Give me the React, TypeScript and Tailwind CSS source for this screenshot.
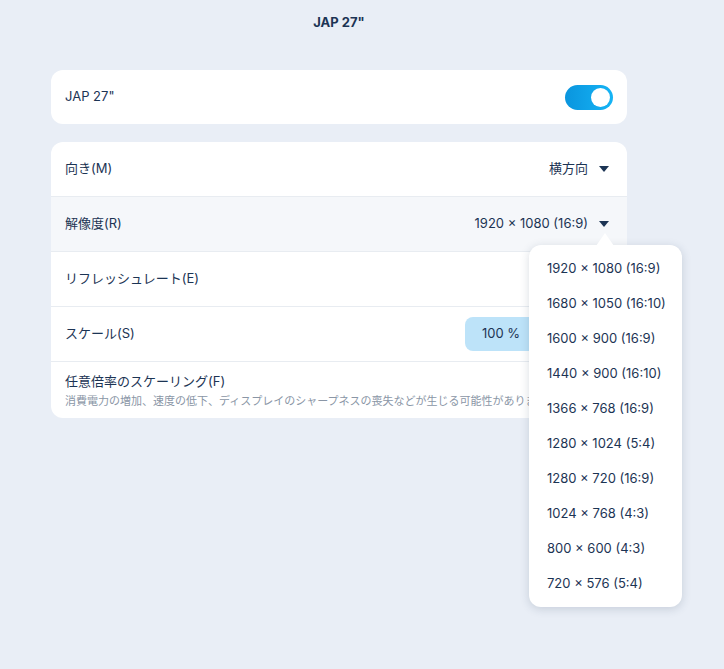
const resolutions = [
  '1920 × 1080 (16:9)',
  '1680 × 1050 (16:10)',
  '1600 × 900 (16:9)',
  '1440 × 900 (16:10)',
  '1366 × 768 (16:9)',
  '1280 × 1024 (5:4)',
  '1280 × 720 (16:9)',
  '1024 × 768 (4:3)',
  '800 × 600 (4:3)',
  '720 × 576 (5:4)',
];

const Caret = () => (
  <svg width="10" height="6" viewBox="0 0 10 6" className="ml-[11px] mr-[4px]">
    <path d="M0 0h10L5 6z" fill="#1c3454" />
  </svg>
);

const Row = ({ children, className = '' }: { children: React.ReactNode; className?: string }) => (
  <div className={`flex items-center justify-between h-[55px] px-[14px] border-b border-[#e8ecf1] ${className}`}>
    {children}
  </div>
);

export default function App() {
  return (
    <div
      className="min-h-[669px] w-full bg-[#e9eef6] text-[#1c3454] text-[13px]"
      style={{ fontFamily: 'Inter, "Noto Sans CJK JP", sans-serif' }}
    >
      <div className="ml-[51px] w-[576px] pt-[13px]">
        <h1 className="text-center font-bold text-[13px] leading-[18px]">JAP 27"</h1>

        <div className="mt-[39px] bg-white rounded-[12px] h-[54px] flex items-center justify-between px-[14px]">
          <span>JAP 27"</span>
          <div className="w-[48px] h-[25px] rounded-full bg-gradient-to-r from-[#0a95de] to-[#16b4f5] flex items-center justify-end px-[3px]">
            <div className="w-[19px] h-[19px] rounded-full bg-white" />
          </div>
        </div>

        <div className="mt-[18px] bg-white rounded-[12px] overflow-visible">
          <Row>
            <span>向き(M)</span>
            <div className="flex items-center">
              <span>横方向</span>
              <Caret />
            </div>
          </Row>
          <Row className="bg-[#f5f7fa] relative">
            <span>解像度(R)</span>
            <div className="flex items-center">
              <span>1920 × 1080 (16:9)</span>
              <Caret />
            </div>
            <div className="absolute left-[478px] top-[48px] w-[153px] z-10">
              <svg width="18" height="13" viewBox="0 0 18 13" className="absolute left-[67px] -top-[12px]">
                <path d="M0 13L9 0l9 13z" fill="#ffffff" />
              </svg>
              <div className="bg-white rounded-[12px] shadow-[0_2px_10px_rgba(40,60,90,0.18)] py-[6px]">
                {resolutions.map((r) => (
                  <div key={r} className="h-[35px] flex items-center pl-[18px]">
                    {r}
                  </div>
                ))}
              </div>
            </div>
          </Row>
          <Row>
            <span>リフレッシュレート(E)</span>
          </Row>
          <Row>
            <span>スケール(S)</span>
            <div className="w-[150px] h-[34px] rounded-[8px] bg-[#bde3f9] flex items-center pl-[17px] -mr-[2px]">
              100 %
            </div>
          </Row>
          <div className="h-[56px] px-[14px] pt-[10px] overflow-hidden">
            <div className="leading-[18px]">任意倍率のスケーリング(F)</div>
            <div className="text-[11px] text-[#8a96a6] whitespace-nowrap leading-[16px] mt-[3px]">
              消費電力の増加、速度の低下、ディスプレイのシャープネスの喪失などが生じる可能性があります。
            </div>
          </div>
        </div>
      </div>
    </div>
  );
}
